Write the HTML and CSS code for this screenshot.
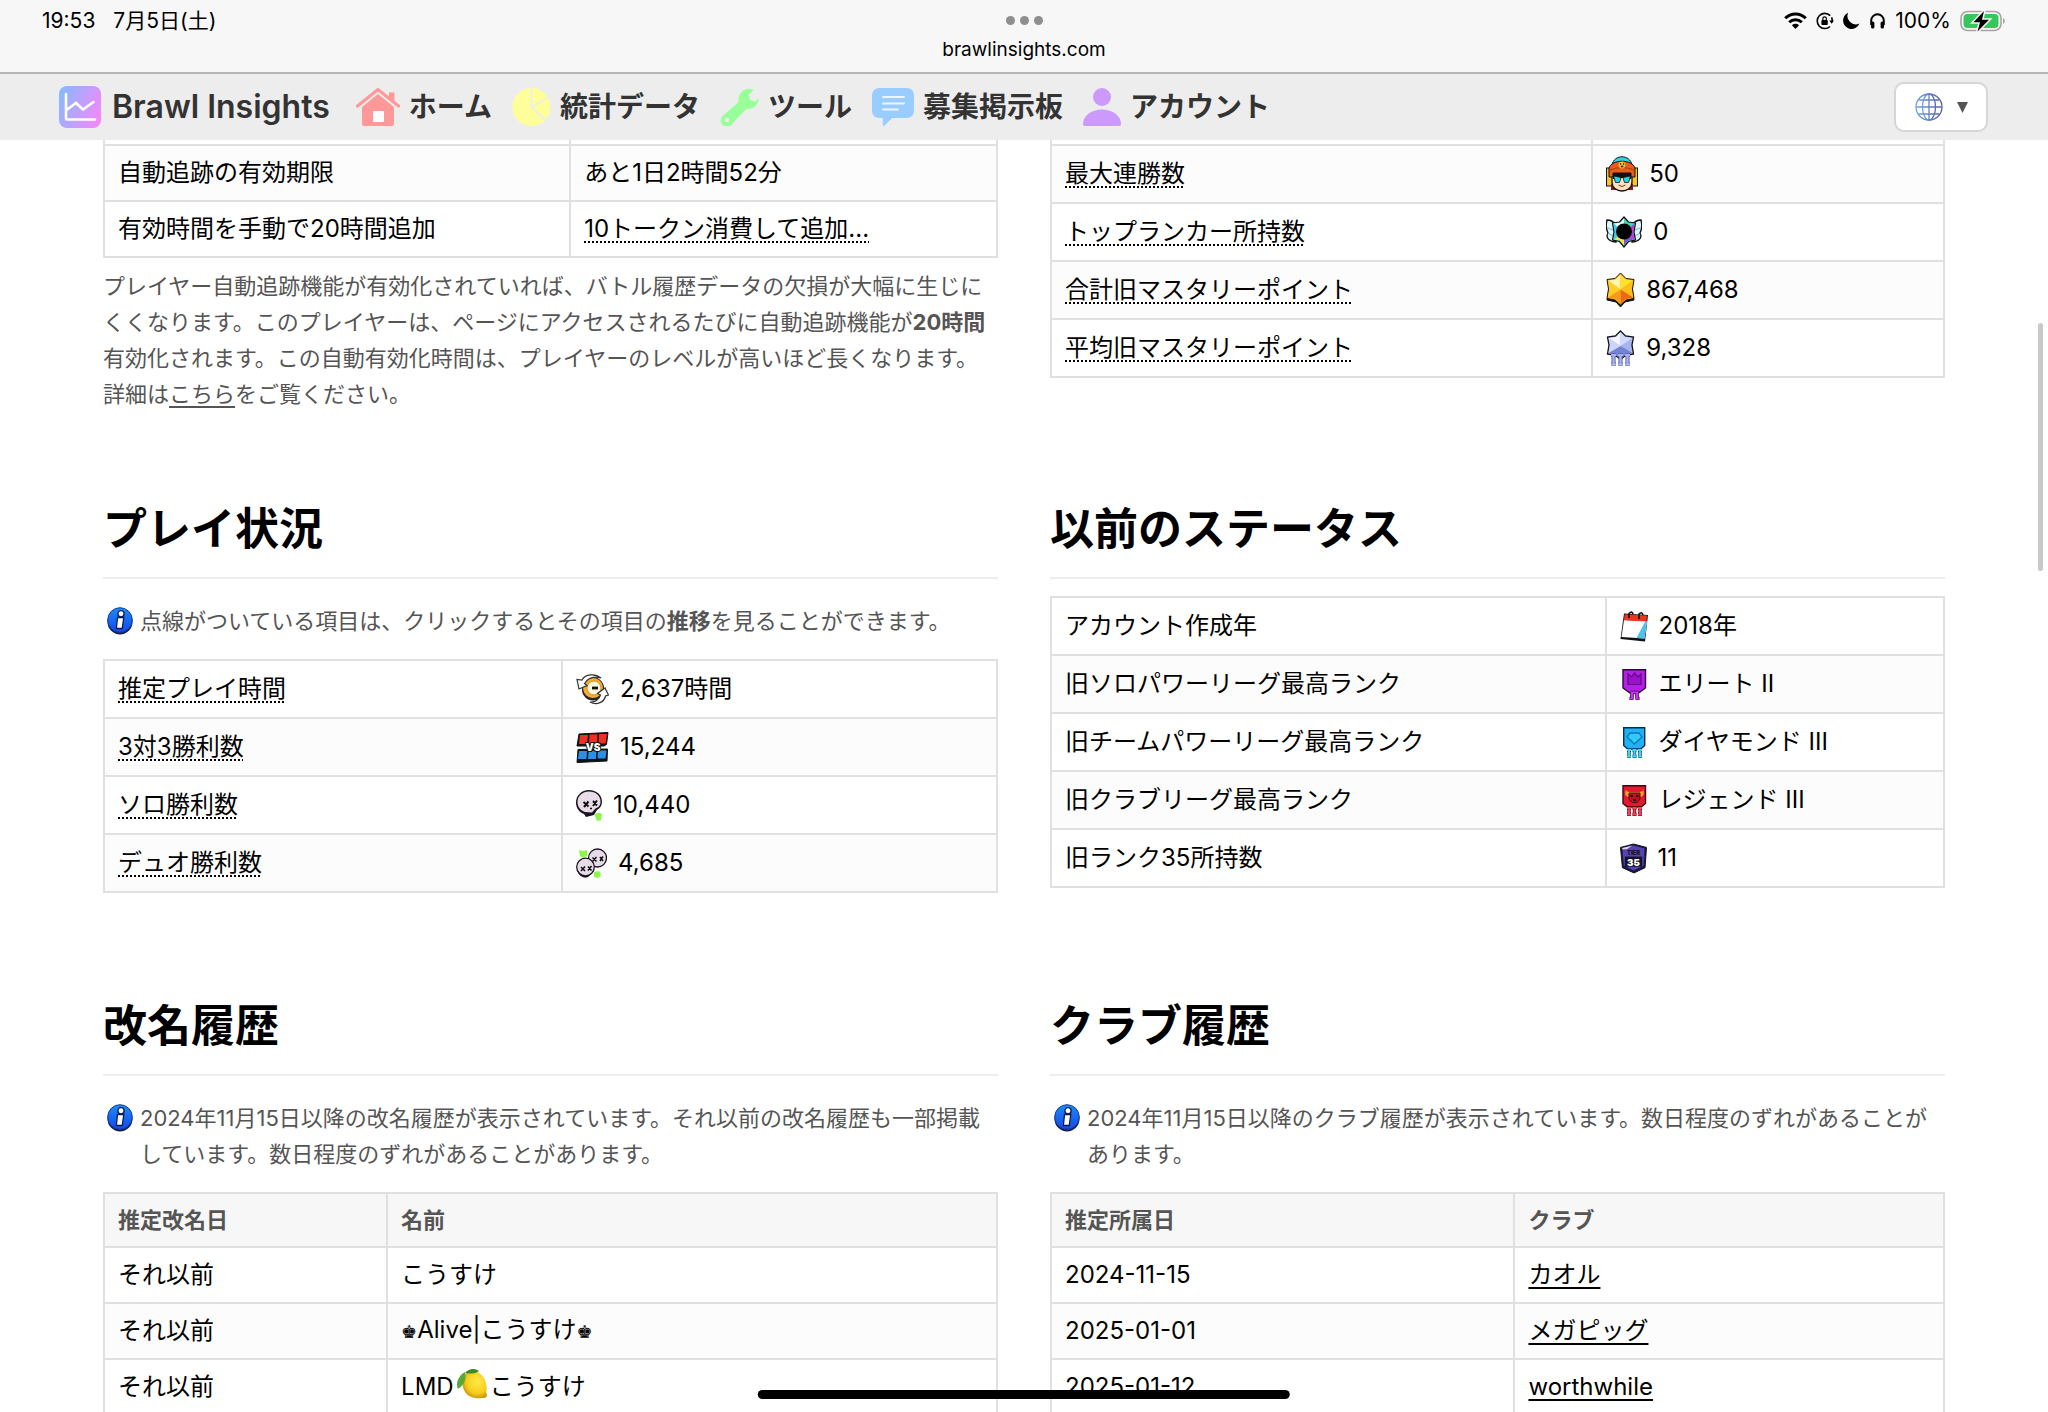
FILE: index.html
```
<!DOCTYPE html>
<html lang="ja">
<head>
    <meta charset="UTF-8">
    <meta name="viewport" content="width=device-width, initial-scale=1.0">
    <title>Brawl Insights</title>
    <link rel="stylesheet" href="styles.css">
</head>
<body>
    <!-- 共通アイコン -->
    <svg class="defs" aria-hidden="true">
        <defs>
            <linearGradient id="logoGrad" x1="0" x2="1" y1="0.3" y2="0.7">
                <stop offset="0" stop-color="#8ab8ff"/>
                <stop offset="1" stop-color="#f488fb"/>
            </linearGradient>
            <linearGradient id="globeGrad" x1="0" x2="1">
                <stop offset="0" stop-color="#6fa3e0"/>
                <stop offset="1" stop-color="#5a5fb0"/>
            </linearGradient>
            <linearGradient id="infoGrad" x1="0" x2="0" y1="0" y2="1">
                <stop offset="0" stop-color="#1a8cf5"/>
                <stop offset="1" stop-color="#1548ee"/>
            </linearGradient>
            <radialGradient id="lemonGrad" cx="0.6" cy="0.4" r="0.6">
                <stop offset="0" stop-color="#ffe94a"/>
                <stop offset="0.7" stop-color="#f7cf1d"/>
                <stop offset="1" stop-color="#cf9a10"/>
            </radialGradient>
        </defs>
        <symbol id="icon-info" viewBox="0 0 26 28">
            <circle cx="13" cy="15" r="12.5" fill="#14204e"/>
            <circle cx="13" cy="13" r="12.3" fill="url(#infoGrad)" stroke="#123a9c" stroke-width="1"/>
            <path d="M10.500 10.500h6.300l-1.600 11h-5.800z" fill="#fff" stroke="#0b1a50" stroke-width="1.300"/>
            <circle cx="14" cy="6.800" r="3.100" fill="#fff" stroke="#0b1a50" stroke-width="1.300"/>
        </symbol>
    </svg>

    <header class="status-bar">
        <div class="status-left">
            <span>19:53</span>
            <span>7月5日(土)</span>
        </div>
        <div class="status-center">
            <div class="dots"><i></i><i></i><i></i></div>
            <div class="url">brawlinsights.com</div>
        </div>
        <div class="status-right">
            <svg width="23" height="17" viewBox="0 0 23 17" fill="none" stroke="#000" stroke-width="3">
                <path d="M1.200 6.200a14.600 14.600 0 0 1 20.600 0M5.200 10.300a9 9 0 0 1 12.600 0"/>
                <path d="M11.500 17l-3.600-3.800a5.200 5.200 0 0 1 7.200 0z" fill="#000" stroke="none"/>
            </svg>
            <svg width="18" height="18" viewBox="0 0 18 18" fill="none" stroke="#000" stroke-width="1.600">
                <path d="M14.200 3.600A7.600 7.600 0 1 0 14 14.500M15.600 5.400a7.600 7.600 0 0 1 .6 3.800"/>
                <path d="M13.300 8.600h4.700l-2.300 3.200z" fill="#000" stroke="none"/>
                <rect x="5.400" y="8" width="6.400" height="5" rx="1" fill="#000" stroke="none"/>
                <path d="M6.900 8V6.500a1.700 1.700 0 0 1 3.400 0V8" stroke-width="1.200"/>
            </svg>
            <svg width="17" height="17" viewBox="0 0 17 17">
                <path d="M5.200.8A8.400 8.400 0 1 0 16.400 11.400 8.200 8.200 0 0 1 5.200.8z"/>
            </svg>
            <svg width="17" height="17" viewBox="0 0 17 17">
                <path d="M2.200 13V8.600a6.300 6.300 0 0 1 12.600 0V13" fill="none" stroke="#000" stroke-width="2"/>
                <rect x="2" y="9.500" width="3.400" height="7" rx="1.500"/>
                <rect x="11.600" y="9.500" width="3.400" height="7" rx="1.500"/>
            </svg>
            <span>100%</span>
            <svg class="battery" width="46" height="22" viewBox="0 0 46 22">
                <rect x="1" y="1.500" width="40" height="19" rx="6.500" fill="none" stroke="#a5a5a5" stroke-width="1.600"/>
                <rect x="3.500" y="4" width="35" height="14" rx="4" fill="#35c759"/>
                <path d="M43 8v6c2.300-1 2.300-5 0-6z" fill="#a5a5a5"/>
                <path d="M24 1L13.500 12.300h6.500L17.500 21.500 29 9.800h-7z" stroke="#f7f7f7" stroke-width="3" paint-order="stroke"/>
            </svg>
        </div>
    </header>

    <nav class="navbar">
        <a class="nav-item brand" href="#">
            <svg width="42" height="42" viewBox="0 0 42 42">
                <rect width="42" height="42" rx="8" fill="url(#logoGrad)"/>
                <path d="M7 8v24.500a1 1 0 0 0 1 1h28M7.500 24l9.500-7 7 6.500L34.500 16" fill="none" stroke="#fff" stroke-width="2.600" stroke-linecap="round"/>
            </svg>
            <span>Brawl Insights</span>
        </a>
        <a class="nav-item" href="#">
            <svg width="44" height="38" viewBox="0 0 44 38" fill="#ff9999">
                <path d="M6 19L22 4.500 38 19v17a2 2 0 0 1-2 2H8a2 2 0 0 1-2-2z"/>
                <path d="M1.500 18L22 1.500 42.500 18" fill="none" stroke="#ededed" stroke-width="7"/>
                <path d="M1.500 18L22 1.500 42.500 18" fill="none" stroke="#ff9999" stroke-width="3.200" stroke-linecap="round"/>
                <path d="M33 4.500h5.500v10L33 9.800z"/>
                <rect x="17" y="23" width="11" height="11" rx="1" fill="#fff"/>
            </svg>
            <span>ホーム</span>
        </a>
        <a class="nav-item" href="#">
            <svg width="39" height="38" viewBox="0 0 39 38">
                <circle cx="19.500" cy="19" r="19" fill="#ffff99"/>
                <path d="M19.500 0v19l15.500 15M19.500 19L37 9" fill="none" stroke="#ededed" stroke-width="1.800"/>
            </svg>
            <span>統計データ</span>
        </a>
        <a class="nav-item" href="#">
            <svg width="39" height="38" viewBox="0 0 39 38">
                <path d="M34 1.800L29 6.500l1 5.500 5.500 1.500 3-3.500c.7 6-5 12-12 10.800L12.500 35.500a6.300 6.300 0 1 1-10-7.500L18.500 14C17.500 5 25-2 34 1.800z" fill="#99ff99"/>
                <circle cx="7" cy="32" r="2.200" fill="#ededed"/>
            </svg>
            <span>ツール</span>
        </a>
        <a class="nav-item" href="#">
            <svg width="42" height="38" viewBox="0 0 42 38">
                <path d="M7 0h28a7 7 0 0 1 7 7v16a7 7 0 0 1-7 7H20l-7.500 7.500c-1 .8-1.800.3-1.700-1V30H7a7 7 0 0 1-7-7V7a7 7 0 0 1 7-7z" fill="#99ccff"/>
                <path d="M11 9h21M11 15.500h21M11 21.500h15" stroke="#eef6ff" stroke-width="1.800" stroke-linecap="round"/>
            </svg>
            <span>募集掲示板</span>
        </a>
        <a class="nav-item" href="#">
            <svg width="38" height="38" viewBox="0 0 38 38" fill="#cc99ff">
                <circle cx="19" cy="9" r="9"/>
                <path d="M0 36c0-8 8-14.500 19-14.500S38 28 38 36c0 1.300-.8 2-2 2H2c-1.200 0-2-.7-2-2z"/>
            </svg>
            <span>アカウント</span>
        </a>
        <button class="lang-btn" type="button" aria-label="言語">
            <svg width="28" height="28" viewBox="0 0 28 28" fill="none" stroke="url(#globeGrad)" stroke-width="1.300">
                <circle cx="14" cy="14" r="13"/>
                <ellipse cx="14" cy="14" rx="6.500" ry="13"/>
                <path d="M14 1l.01 26M1 14l26 .01M3.500 7h21M3.500 21h21"/>
            </svg>
            <svg width="11" height="11" viewBox="0 0 11 11"><path d="M0 0h11L5.500 11z" fill="#555"/></svg>
        </button>
    </nav>

    <main class="content">
        <div class="grid">
            <section>
                <table class="tracking">
                    <tbody>
                        <tr class="cut"><td></td><td></td></tr>
                        <tr><th scope="row">自動追跡の有効期限</th><td>あと1日2時間52分</td></tr>
                        <tr><th scope="row">有効時間を手動で20時間追加</th><td><a class="dotted" href="#">10トークン消費して追加...</a></td></tr>
                    </tbody>
                </table>
                <p class="desc">プレイヤー自動追跡機能が有効化されていれば、バトル履歴データの欠損が大幅に生じにくくなります。このプレイヤーは、ページにアクセスされるたびに自動追跡機能が<b>20時間</b>有効化されます。この自動有効化時間は、プレイヤーのレベルが高いほど長くなります。<br>詳細は<a href="#">こちら</a>をご覧ください。</p>
            </section>

            <section>
                <table class="records">
                    <tbody>
                        <tr class="cut"><td></td><td></td></tr>
                        <tr>
                            <th scope="row"><a class="dotted" href="#">最大連勝数</a></th>
                            <td><span class="value">
                                <svg width="32" height="36" viewBox="0 0 32 36">
                                    <rect x=".5" y="12" width="6" height="18" fill="#f7c81c" stroke="#111"/>
                                    <rect x="25.500" y="12" width="6" height="18" fill="#f7c81c" stroke="#111"/>
                                    <path d="M5 28h22v6H5z" fill="#8e1a1a"/>
                                    <path d="M6 9C8-2 24-2 26 9z" fill="#35d3dc" stroke="#111"/>
                                    <path d="M6 19h20v7c0 6-5 9-10 9S6 32 6 26z" fill="#ffe2bd" stroke="#111" stroke-width="1.300"/>
                                    <path d="M7 17h18v6l-9-1-9 1z" fill="#111"/>
                                    <path d="M7.500 20l7.500 1.500-1.500 5h-4zM24.500 20L17 21.500l1.500 5h4z" fill="#20d9e6" stroke="#111" stroke-width=".8"/>
                                    <path d="M3 21v-9C6 3 26 3 29 12v9h-4v-4H7v4z" fill="#ea5b1c" stroke="#111"/>
                                    <path d="M4 14q12-5 24 0" fill="none" stroke="#a83c0c"/>
                                    <circle cx="16" cy="9" r="3.400" fill="#f9c51f"/>
                                    <path d="M14 8h1.200M17 8h1.200M15 10.500h2.300" stroke="#111" stroke-width="1.400"/>
                                    <path d="M12.500 29q3.500 3 7 0" fill="none" stroke="#7a4020"/>
                                </svg>
                                50</span></td>
                        </tr>
                        <tr>
                            <th scope="row"><a class="dotted" href="#">トップランカー所持数</a></th>
                            <td><span class="value">
                                <svg width="36" height="32" viewBox="0 0 36 32">
                                    <path d="M1 4c3 0 7 2 9 5v17C4 26-1 22 2 17 0 13 0 8 1 4zM35 4c-3 0-7 2-9 5v17c6 0 11-4 8-9 2-4 2-9 1-13z" fill="#d9f6fb" stroke="#111" stroke-width="1.300"/>
                                    <path d="M2 12c2 1 4 1 6 3M3 18c2 1 3 1 5 2M34 12c-2 1-4 1-6 3M33 18c-2 1-3 1-5 2" fill="none" stroke="#6fb6c6"/>
                                    <path d="M18 1l4.500 5 7 1-1.500 9 1.500 8-7 1.500L18 31l-4.500-5.500-7-1.500L8 16 6.500 7l7-1z" fill="#3ed5b4" stroke="#111" stroke-width="1.200"/>
                                    <path d="M18 16L7.500 7.500l6.500-.800L18 2.500z" fill="#effffa"/>
                                    <path d="M18 16L28.500 8 27 16l1.500 7.500z" fill="#d12be0"/>
                                    <path d="M18 16l10 7.500-6 1L18 29.500z" fill="#8c4ae6"/>
                                    <path d="M18 16v13.500L14 24.500l-6-1z" fill="#f4e64b"/>
                                    <path d="M18 16L7.500 23.500 9 16 7.500 7.500z" fill="#48c9f3"/>
                                    <circle cx="18" cy="15.500" r="8"/>
                                </svg>
                                0</span></td>
                        </tr>
                        <tr>
                            <th scope="row"><a class="dotted" href="#">合計旧マスタリーポイント</a></th>
                            <td><span class="value">
                                <svg width="29" height="36" viewBox="0 0 29 36">
                                    <path d="M3 17l-2 11 9 2 4.500 5L19 30l9-2-2-11z" fill="#111" stroke="#111"/>
                                    <path d="M14.500 1L20 6.500l8 1-1.500 9.500 1.500 9.500-8 1.500-5.500 5L9 28l-8-1.500L2.500 17 1 7.500l8-1z" fill="#fbb51c" stroke="#221100"/>
                                    <path d="M14.500 17.500L2 8.500l7.500-1 5-5z" fill="#fff4ae"/>
                                    <path d="M14.500 17.500v-15l5 5 7.500 1z" fill="#ffe12e"/>
                                    <path d="M14.500 17.500L27 8.500 25.500 17l1.500 8.500z" fill="#fdbf1c"/>
                                    <path d="M14.500 17.500l12.500 8-7.500 1.500-5 5z" fill="#e9661a"/>
                                    <path d="M14.500 17.500V32l-5-5L2 25.500z" fill="#f69a1b"/>
                                    <path d="M14.500 17.500L2 25.500 3.500 17 2 8.500z" fill="#ffcf25"/>
                                </svg>
                                867,468</span></td>
                        </tr>
                        <tr>
                            <th scope="row"><a class="dotted" href="#">平均旧マスタリーポイント</a></th>
                            <td><span class="value">
                                <svg width="29" height="36" viewBox="0 0 29 36">
                                    <path d="M14.500 1l5 5 8 1L26 15l1.500 9-8 1.500-5 4-5-4L1.500 24 3 15 1.500 7l8-1z" fill="#a9b4ec" stroke="#111" stroke-width="1.300"/>
                                    <path d="M14.500 16L2.500 8 10 7l4.500-5z" fill="#f4f6ff"/>
                                    <path d="M14.500 16V2L19 7l7.500 1z" fill="#d3daff"/>
                                    <path d="M14.500 16l12 7-7.500 1.500-4.500 4-4.500-4L2.500 23z" fill="#7682d2"/>
                                    <path d="M14.500 16L2.500 23 4 15 2.500 8z" fill="#cdd5fb"/>
                                    <path d="M5 25h5M5 34.500h5M7.500 24v10M12 25h5M12 34.500h5M14.500 24v10M19 25h5M19 34.500h5M21.500 24v10" stroke="#4a5296" stroke-width="4"/>
                                    <path d="M5 25h5M5 34.500h5M7.500 24v10M12 25h5M12 34.500h5M14.500 24v10M19 25h5M19 34.500h5M21.500 24v10" stroke="#a8b1ec" stroke-width="2.400"/>
                                </svg>
                                9,328</span></td>
                        </tr>
                    </tbody>
                </table>
            </section>

            <section>
                <h2>プレイ状況</h2>
                <div class="note">
                    <svg width="26" height="28"><use href="#icon-info"/></svg>
                    <p>点線がついている項目は、クリックするとその項目の<b>推移</b>を見ることができます。</p>
                </div>
                <table class="play">
                    <tbody>
                        <tr>
                            <th scope="row"><a class="dotted" href="#">推定プレイ時間</a></th>
                            <td><span class="value">
                                <svg width="33" height="31" viewBox="0 0 33 31">
                                    <circle cx="17" cy="15.500" r="11" fill="#222"/>
                                    <circle cx="17" cy="14" r="10.500" fill="#f3ad35" stroke="#222"/>
                                    <circle cx="18" cy="14" r="7" fill="#fff7dd" stroke="#d58a1c"/>
                                    <path d="M16 14h6" stroke="#111" stroke-width="2.800"/>
                                    <path d="M25 4C19-1 9 0 6 6L1 5.500 3 15l8-3.500-2.500-2C12 4 18 2 25 4z" fill="#fff" stroke="#333" stroke-width="1.200"/>
                                    <path d="M14 28c6 3.500 14 1 15.500-6l3-1L29 14l-7.500 5.500 3 1.500c-1 5-6 7.500-10.500 7z" fill="#fff" stroke="#333" stroke-width="1.200"/>
                                </svg>
                                2,637時間</span></td>
                        </tr>
                        <tr>
                            <th scope="row"><a class="dotted" href="#">3対3勝利数</a></th>
                            <td><span class="value">
                                <svg width="33" height="31" viewBox="0 0 33 31">
                                    <path d="M3 2l29-1.500-1.500 12L28 14H1zM2 17.500l29.500-.500L31 29 1 30.500z" fill="#111" stroke="#111"/>
                                    <path d="M4 3h8l-1 9H3zM13.500 2.500h8l-.500 9.500h-8zM23 2h8l-1.500 9.500h-7z" fill="#ef2f22"/>
                                    <path d="M3 19h8l-.500 8H2zM12.500 19h8l-.500 8h-8zM22 18.500h8.500L29.500 26.500h-8z" fill="#2a8fe6"/>
                                    <text x="17" y="19" class="vs">VS</text>
                                </svg>
                                15,244</span></td>
                        </tr>
                        <tr>
                            <th scope="row"><a class="dotted" href="#">ソロ勝利数</a></th>
                            <td><span class="value">
                                <svg width="26" height="31" viewBox="0 0 26 31">
                                    <path d="M13 0c7.500 0 13 5 13 11.500 0 4-2 7-5 8.500l-3 5-8 2-2-3C3 22 0 18 0 12.500 0 5.500 5.500 0 13 0z" fill="#1b1420"/>
                                    <path d="M13 1.500c6.500 0 11.500 4 11.500 10 0 4-2 6-5 7L16 22.500l-7-.500C4.500 20.500 1.500 17 1.500 12c0-6 5-10.500 11.500-10.500z" fill="#e6dbe6"/>
                                    <path d="M7.500 12l5 4.500M12.500 11.500l-4.500 5.500M17 11l4 4.500M21 10.500L17 16" stroke="#111" stroke-width="2"/>
                                    <path d="M14 18.500h2" stroke="#111" stroke-width="1.500"/>
                                    <path d="M18.500 24.500l4-2 3.500 1.500-1 6.500-4 .300z" fill="#8df64b"/>
                                </svg>
                                10,440</span></td>
                        </tr>
                        <tr>
                            <th scope="row"><a class="dotted" href="#">デュオ勝利数</a></th>
                            <td><span class="value">
                                <svg width="31" height="31" viewBox="0 0 31 31">
                                    <path d="M3 2l4 1 4-1v6l-4 2-3-2zM18 24l5-1 2 3-2 4-5-1z" fill="#8df64b"/>
                                    <circle cx="21.500" cy="10" r="9" fill="#e6dbe6" stroke="#1b1420" stroke-width="1.300"/>
                                    <path d="M16.500 9.500l4 4M20.500 9l-4 4.500M24 9l3 4M27 8.500l-3 4.500" stroke="#111" stroke-width="1.500"/>
                                    <path d="M1 21c1 7 7 10 11 8l4-4z" fill="#1b1420"/>
                                    <circle cx="9.500" cy="19" r="8.800" fill="#e6dbe6" stroke="#1b1420" stroke-width="1.300"/>
                                    <path d="M5 19l4 4M9 18.500l-4 4.500M12 18.500l3.500 4M15.500 18L12 22.500" stroke="#111" stroke-width="1.500"/>
                                </svg>
                                4,685</span></td>
                        </tr>
                    </tbody>
                </table>
            </section>

            <section>
                <h2>以前のステータス</h2>
                <table class="previous">
                    <tbody>
                        <tr>
                            <th scope="row">アカウント作成年</th>
                            <td><span class="value">
                                <svg width="28" height="31" viewBox="0 0 28 31">
                                    <path d="M4 2.500l24 1.500-3 26.500L.500 28z" fill="#111"/>
                                    <path d="M4 9l23 1-2.500 17.500L1.500 26z" fill="#fff"/>
                                    <path d="M25.500 10l1.500.200-2.500 17.300-8-.600z" fill="#49c4ee"/>
                                    <path d="M4.800 3.300L27 4.500l-.500 6L3.800 9.200z" fill="#ee3420"/>
                                    <path d="M9 7V2.500q3-3 4 .500M19 8V3q3-3 4 1" fill="none" stroke="#111" stroke-width="1.600"/>
                                </svg>
                                2018年</span></td>
                        </tr>
                        <tr>
                            <th scope="row">旧ソロパワーリーグ最高ランク</th>
                            <td><span class="value">
                                <svg width="28" height="31" viewBox="0 0 28 31">
                                    <path d="M3 .700h22.500V19l-7 5h-8.500L3 19z" fill="#b41ee8" stroke="#2b0838" stroke-width="1.400"/>
                                    <path d="M8 5l3.500 3L14.500 4 18 8l3-3v10.500H8z" fill="#9a12c8" stroke="#5c0a7c" stroke-width="1.200"/>
                                    <path d="M10.500 23.500h8M9.500 29.500h4M15.500 29.500h4M12 23v7M17 23v7" stroke="#3d0a50" stroke-width="3.600"/>
                                    <path d="M10.500 23.500h8M9.500 29.500h4M15.500 29.500h4M12 23v7M17 23v7" stroke="#c135ee" stroke-width="2"/>
                                </svg>
                                エリート II</span></td>
                        </tr>
                        <tr>
                            <th scope="row">旧チームパワーリーグ最高ランク</th>
                            <td><span class="value">
                                <svg width="28" height="31" viewBox="0 0 28 31">
                                    <path d="M3.700 .700h21V18.500l-4 3.500h-13l-4-3.500z" fill="#22b1f4" stroke="#073049" stroke-width="1.400"/>
                                    <path d="M10 6h9l3 4-7.500 7L7 10z" fill="#31cbf9" stroke="#0b77bb" stroke-width="1.300"/>
                                    <path d="M7 23h4M7 29.500h4M9 22v8M12.500 23h4M12.500 29.500h4M14.500 22v8M18 23h4M18 29.500h4M20 22v8" stroke="#0b4b68" stroke-width="3.400"/>
                                    <path d="M7 23h4M7 29.500h4M9 22v8M12.500 23h4M12.500 29.500h4M14.500 22v8M18 23h4M18 29.500h4M20 22v8" stroke="#48cdf5" stroke-width="2"/>
                                </svg>
                                ダイヤモンド III</span></td>
                        </tr>
                        <tr>
                            <th scope="row">旧クラブリーグ最高ランク</th>
                            <td><span class="value">
                                <svg width="28" height="31" viewBox="0 0 28 31">
                                    <path d="M3 .700h22.500V18.500l-4.500 3.500h-13.500L3 18.500z" fill="#e3192f" stroke="#3f0610" stroke-width="1.400"/>
                                    <path d="M6 5c1 2 3 2 5 2h7c2 0 4 0 5-2 2 4 0 7-3 7H9c-3 0-5-3-3-7z" fill="#f5a327"/>
                                    <path d="M9 8h11v6l-3 3.500h-5L9 14z" fill="#c50e24" stroke="#4e0610"/>
                                    <path d="M10.500 11h2.500M16 11h2.500M13 15h3" stroke="#1c0205" stroke-width="2"/>
                                    <path d="M7 23h4M7 29.500h4M9 22v8M12.500 23h4M12.500 29.500h4M14.500 22v8M18 23h4M18 29.500h4M20 22v8" stroke="#4e0610" stroke-width="3.400"/>
                                    <path d="M7 23h4M7 29.500h4M9 22v8M12.500 23h4M12.500 29.500h4M14.500 22v8M18 23h4M18 29.500h4M20 22v8" stroke="#f24159" stroke-width="2"/>
                                </svg>
                                レジェンド III</span></td>
                        </tr>
                        <tr>
                            <th scope="row">旧ランク35所持数</th>
                            <td><span class="value">
                                <svg width="27" height="31" viewBox="0 0 28 31">
                                    <path d="M14 .500L27.500 4 26 25l-11.500 5.500L2.500 25 .500 4z" fill="#1c1740" stroke="#111"/>
                                    <path d="M14 2l11.500 3L24.500 23 14 28 4 23 2.500 5z" fill="#5642b5"/>
                                    <path d="M2 4.500L13 2 7 6H2.500z" fill="#ddd8fa"/>
                                    <path d="M5 13.500h18V24H5z" fill="#15122c"/>
                                    <text x="14" y="12" class="tier">TIER</text>
                                    <text x="14" y="23" class="tier-num">35</text>
                                </svg>
                                11</span></td>
                        </tr>
                    </tbody>
                </table>
            </section>

            <section>
                <h2>改名履歴</h2>
                <div class="note">
                    <svg width="26" height="28"><use href="#icon-info"/></svg>
                    <p>2024年11月15日以降の改名履歴が表示されています。それ以前の改名履歴も一部掲載しています。数日程度のずれがあることがあります。</p>
                </div>
                <table class="history names">
                    <thead>
                        <tr><th scope="col">推定改名日</th><th scope="col">名前</th></tr>
                    </thead>
                    <tbody>
                        <tr><td>それ以前</td><td>こうすけ</td></tr>
                        <tr><td>それ以前</td><td><span class="king">♚</span>Alive|こうすけ<span class="king">♚</span></td></tr>
                        <tr>
                            <td>それ以前</td>
                            <td>LMD<svg class="lemon" width="32" height="30" viewBox="0 0 32 30">
                                <path d="M11 4c7-5 15 0 18 7 2 5 2 9 1 12l1 3c0 3-3 3-5 3-7 1-15-1-18-8C5 14 6 8 11 4z" fill="url(#lemonGrad)"/>
                                <path d="M9 4c4-5 10-5 14-2-4 3-9 3-14 2z" fill="#3d8a26"/>
                                <path d="M9 3C3 6-1 14 2 20c5-3 9-9 7-17z" fill="#58a83a"/>
                            </svg>こうすけ</td>
                        </tr>
                    </tbody>
                </table>
            </section>

            <section>
                <h2>クラブ履歴</h2>
                <div class="note">
                    <svg width="26" height="28"><use href="#icon-info"/></svg>
                    <p>2024年11月15日以降のクラブ履歴が表示されています。数日程度のずれがあることがあります。</p>
                </div>
                <table class="history clubs">
                    <thead>
                        <tr><th scope="col">推定所属日</th><th scope="col">クラブ</th></tr>
                    </thead>
                    <tbody>
                        <tr><td>2024-11-15</td><td><a href="#">カオル</a></td></tr>
                        <tr><td>2025-01-01</td><td><a href="#">メガピッグ</a></td></tr>
                        <tr><td>2025-01-12</td><td><a href="#">worthwhile</a></td></tr>
                    </tbody>
                </table>
            </section>
        </div>
    </main>

    <div class="scroll-thumb"></div>
    <div class="home-indicator"></div>
</body>
</html>
```
FILE: styles.css
```
* {
    box-sizing: border-box;
}

body {
    margin: 0;
    height: 100vh;
    display: flex;
    flex-direction: column;
    position: relative;
    overflow: hidden;
    font-family: Inter, "Noto Sans CJK JP", sans-serif;
    font-size: 24px;
    line-height: 36px;
    color: #000;
    background: #fff;
}

svg {
    display: block;
    flex-shrink: 0;
}

a {
    color: inherit;
    text-decoration: underline;
    text-decoration-thickness: 2px;
    text-underline-offset: 4px;
    text-decoration-skip-ink: none;
}

a.dotted {
    text-decoration-style: dotted;
}

.defs {
    position: absolute;
    width: 0;
    height: 0;
}

/* ステータスバー */
.status-bar {
    display: grid;
    grid-template-columns: 1fr auto 1fr;
    height: 74px;
    flex-shrink: 0;
    padding: 6px 42px 0;
    background: #f7f7f7;
    border-bottom: 2px solid #b5b5b5;
    font-size: 21px;
    line-height: 29px;
}

.status-left {
    display: flex;
    gap: 18px;
}

.status-center {
    text-align: center;
}

.dots {
    display: flex;
    justify-content: center;
    align-items: center;
    gap: 5px;
    height: 29px;
}

.dots i {
    width: 9px;
    height: 9px;
    border-radius: 50%;
    background: #8e8e8e;
}

.url {
    font-size: 19px;
}

.status-right {
    display: flex;
    justify-content: flex-end;
    align-items: center;
    gap: 9px;
    height: 29px;
}

/* ナビゲーション */
.navbar {
    display: flex;
    align-items: center;
    gap: 20px;
    height: 66px;
    flex-shrink: 0;
    padding: 0 60px 0 59px;
    background: #ededed;
}

.nav-item {
    display: flex;
    align-items: center;
    gap: 9px;
    font-size: 28px;
    font-weight: 600;
    color: #333;
    text-decoration: none;
    white-space: nowrap;
}

.brand {
    gap: 11px;
    margin-right: 6px;
    font-size: 32px;
}

.lang-btn {
    display: flex;
    align-items: center;
    justify-content: center;
    gap: 14px;
    width: 94px;
    height: 50px;
    margin-left: auto;
    padding: 0;
    background: #fff;
    border: 2px solid #d6d6d6;
    border-radius: 10px;
}

/* 本文 */
.content {
    flex: 1;
    min-height: 0;
    overflow: hidden;
}

.grid {
    display: grid;
    grid-template-columns: 1fr 1fr;
    column-gap: 52px;
    row-gap: 87px;
    padding: 0 103px;
}

h2 {
    margin: 0 0 17px;
    padding-bottom: 18px;
    border-bottom: 2px solid #eee;
    font-size: 44px;
    font-weight: 600;
    line-height: 60px;
}

.desc {
    margin: 10px 0 0;
    font-size: 22px;
    color: #555;
}

.note {
    display: flex;
    gap: 7px;
    padding: 7px 0 20px 4px;
    font-size: 22px;
    color: #555;
}

.note svg {
    margin-top: 4px;
}

.note p {
    margin: 0;
}

/* テーブル */
table {
    width: 100%;
    border-collapse: collapse;
    table-layout: fixed;
}

table:last-child {
    margin-bottom: 16px;
}

th,
td {
    padding: 0 13px;
    border: 2px solid #e0e0e0;
    font-weight: 400;
    text-align: left;
}

tr {
    height: 58px;
}

tbody tr:nth-child(even) {
    background: #fcfcfc;
}

.tracking tr {
    height: 56px;
}

tr.cut {
    height: 5px;
}

.cut td {
    border-top: none;
}

.history tr {
    height: 56px;
}

.history thead tr {
    height: 54px;
    background: #f7f7f7;
}

.history thead th {
    font-size: 22px;
    font-weight: 600;
    color: #555;
}

.tracking tr > :first-child { width: 52.2%; }
.records tr > :first-child { width: 60.6%; }
.play tr > :first-child { width: 51.3%; }
.previous tr > :first-child { width: 62.1%; }
.names tr > :first-child { width: 31.7%; }
.clubs tr > :first-child { width: 51.9%; }

.value {
    display: flex;
    align-items: center;
    gap: 11px;
}

.king {
    font-family: "DejaVu Sans", sans-serif;
    font-size: 18px;
}

.lemon {
    display: inline-block;
    margin: 0 2px;
    vertical-align: -4px;
}

.vs,
.tier,
.tier-num {
    font-family: Inter, sans-serif;
    font-weight: 900;
    text-anchor: middle;
}

.vs {
    font-size: 10px;
    fill: #fff;
    stroke: #111;
    stroke-width: 2px;
    paint-order: stroke;
}

.tier {
    font-size: 6px;
    fill: #15122c;
}

.tier-num {
    font-size: 10px;
    fill: #fff;
}

/* 画面に重なる表示 */
.scroll-thumb {
    position: absolute;
    top: 323px;
    right: 5px;
    width: 5px;
    height: 248px;
    border-radius: 3px;
    background: #c8c8c8;
}

.home-indicator {
    position: absolute;
    bottom: 13px;
    left: 50%;
    width: 26%;
    height: 9px;
    border-radius: 5px;
    background: #000;
    transform: translateX(-50%);
}
```
